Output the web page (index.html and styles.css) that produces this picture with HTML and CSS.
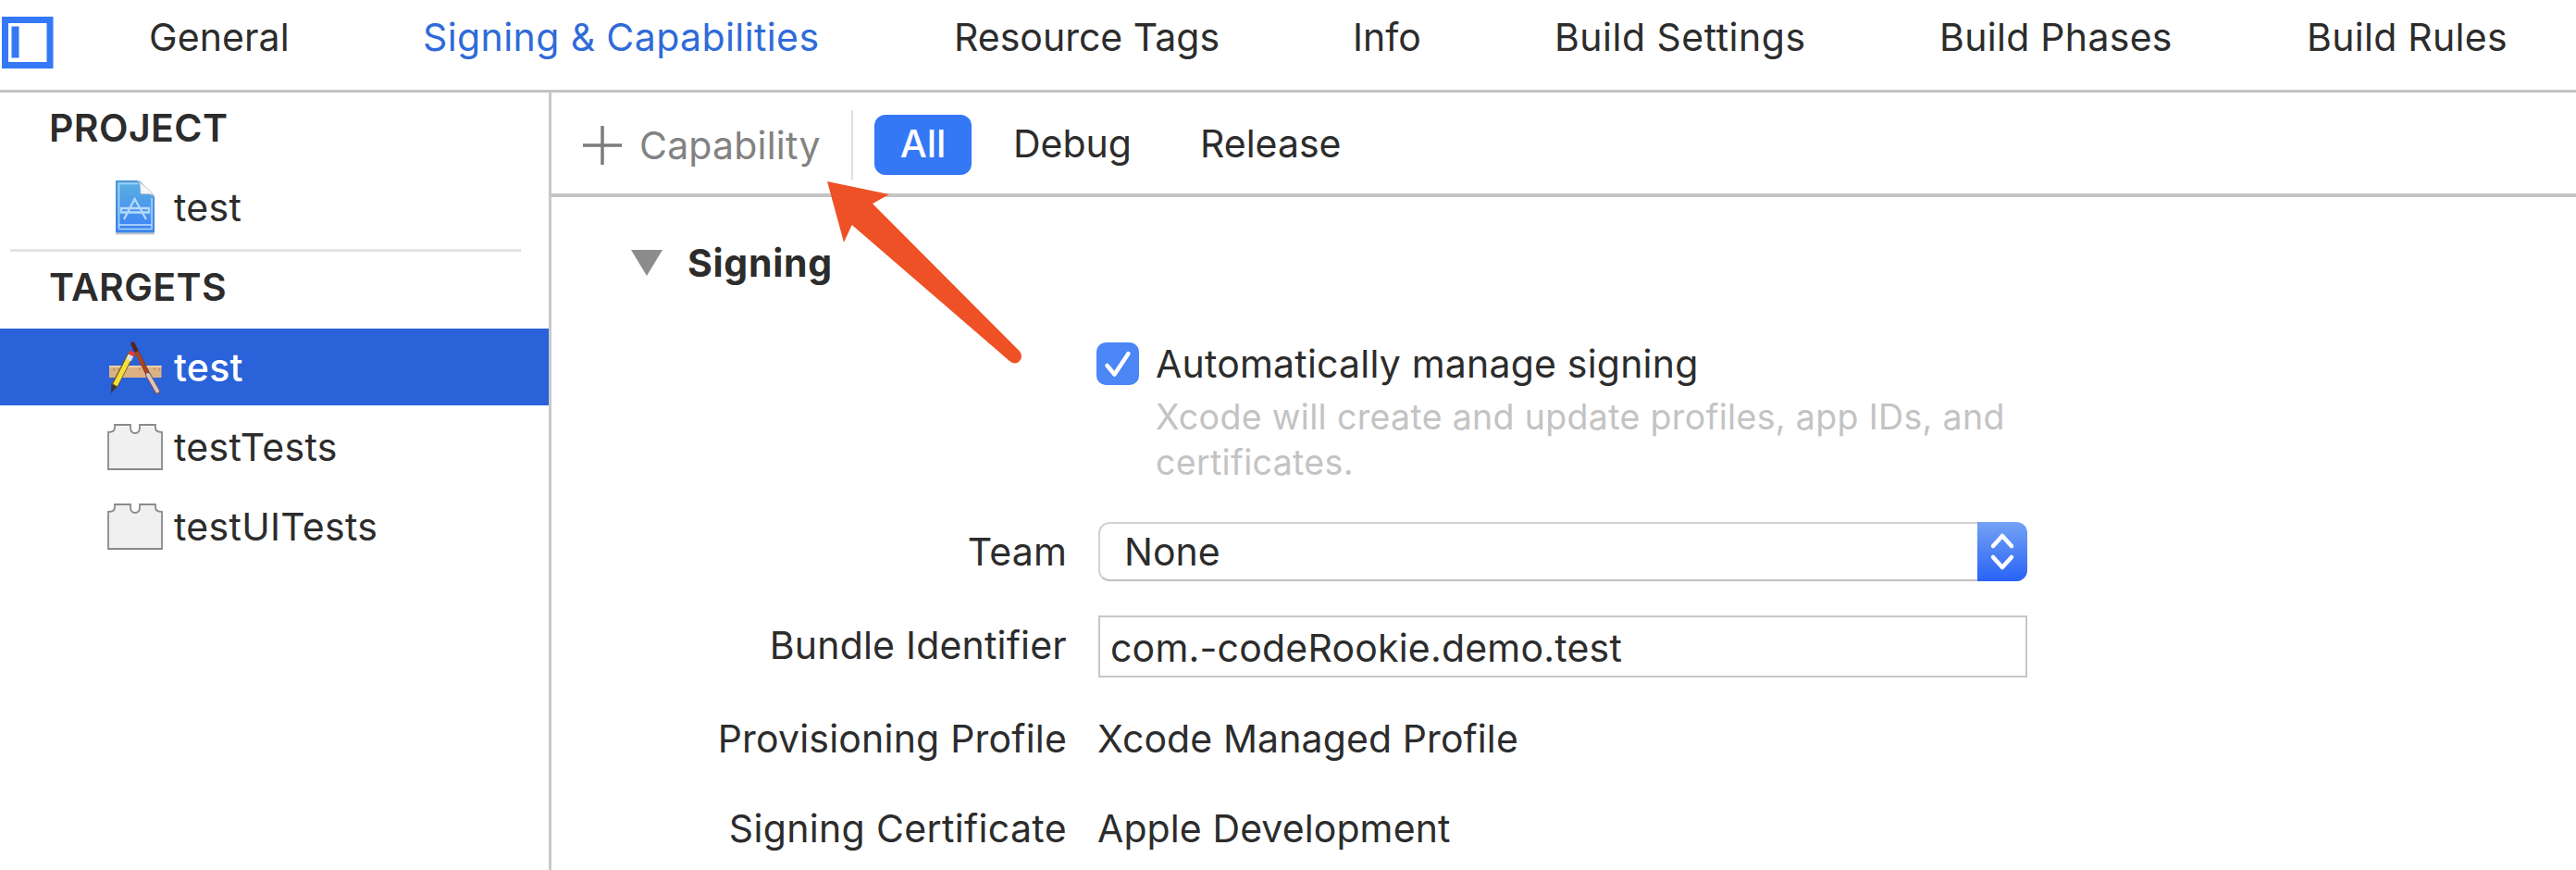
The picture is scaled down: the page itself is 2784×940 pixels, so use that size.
FILE: index.html
```html
<!DOCTYPE html>
<html lang="en">
<head>
<meta charset="utf-8">
<title>Signing &amp; Capabilities</title>
<link rel="stylesheet" href="styles.css">
</head>
<body>
<header class="tabs">
  <svg class="panel-toggle" viewBox="0 0 58 58"><rect x="5.500" y="4.500" width="48.500" height="49" fill="#fff" stroke="#3478f6" stroke-width="7"/><rect x="12.500" y="11.500" width="8" height="34" fill="#3478f6"/></svg>
  <nav class="tab-list">
    <a class="tab t-general">General</a>
    <a class="tab t-signing">Signing &amp; Capabilities</a>
    <a class="tab t-tags">Resource Tags</a>
    <a class="tab t-info">Info</a>
    <a class="tab t-settings">Build Settings</a>
    <a class="tab t-phases">Build Phases</a>
    <a class="tab t-rules">Build Rules</a>
  </nav>
</header>
<div class="body">
  <aside class="sidebar">
    <h2 class="group"><span>PROJECT</span></h2>
    <div class="item project-item">
      <svg class="icon" viewBox="0 0 60 60">
        <defs><linearGradient id="doc" x1="0" y1="0" x2="0" y2="1"><stop offset="0" stop-color="#5cb0e2"/><stop offset="1" stop-color="#3b82f5"/></linearGradient></defs>
        <path d="M9 58.500h42" stroke="#c4c8cd" stroke-width="2"/>
        <path d="M9.500 1.500H32q3 0 5 2.500l11 11q2.500 2 2.500 5v37h-41z" fill="url(#doc)" stroke="#4287cc" stroke-width="1"/>
        <path d="M12.500 53.500V4.500H33M48 20v33.500H12.500" fill="none" stroke="#a9d6f8" stroke-width="1.500"/>
        <path d="M33 1.500q3 2 3 14h8q7 .5 7 4-1-6-18-18z" fill="#f4f6f8" stroke="#b5bfc8" stroke-width=".8"/>
        <path d="M12.500 49h35.500" stroke="#c4e0ff" stroke-width="1.500"/>
        <path d="M30 20L18 43M29 20L42 43M15 31h30v4.500H15z" fill="none" stroke="#b4d9fd" stroke-width="2.300"/>
      </svg>
      <span>test</span>
    </div>
    <hr class="rule">
    <h2 class="group targets"><span>TARGETS</span></h2>
    <div class="item selected">
      <svg class="icon" viewBox="0 0 60 60">
        <rect x="2" y="28" width="56.500" height="13" fill="#dcb184"/>
        <path d="M2 29h56.500" stroke="#efd0a6" stroke-width="2"/>
        <path d="M7 30v4M12 30v3M17 30v4M35 30v3M40 30v4M51 30v3M56 30v4" stroke="#b98e62" stroke-width="1.300"/>
        <path d="M26 15L7 51" stroke="#6c5a1c" stroke-width="7"/>
        <path d="M26 15L8.500 49" stroke="#f6df3e" stroke-width="5"/>
        <path d="M27.500 13L25.500 17" stroke="#dc4038" stroke-width="6.500"/>
        <path d="M25.500 17L23 22" stroke="#dfe2e6" stroke-width="6"/>
        <path d="M4.500 48l5.500 3-6 7z" fill="#3a3638"/>
        <path d="M27.500 4.500L44 37" stroke="#54251e" stroke-width="4.500" stroke-linecap="round"/>
        <path d="M31.500 13L43 36" stroke="#a74324" stroke-width="4.500"/>
        <path d="M44 38L54 56" stroke="#6a5560" stroke-width="6" stroke-linecap="round"/>
        <path d="M44 38L54 55.500" stroke="#dfc3bb" stroke-width="4" stroke-linecap="round"/>
      </svg>
      <span>test</span>
    </div>
    <div class="item">
      <svg class="icon" viewBox="0 0 60 60"><path d="M1 54V14q7 0 7-5V6h17v3q0 6 5 6t5-6V6h17v3q0 5 7 5v40z" fill="#f0f0f0" stroke="#8a8a8a" stroke-width="1.800"/></svg>
      <span>testTests</span>
    </div>
    <div class="item">
      <svg class="icon" viewBox="0 0 60 60"><path d="M1 54V14q7 0 7-5V6h17v3q0 6 5 6t5-6V6h17v3q0 5 7 5v40z" fill="#f0f0f0" stroke="#8a8a8a" stroke-width="1.800"/></svg>
      <span>testUITests</span>
    </div>
  </aside>
  <main class="editor">
    <div class="toolbar">
      <div class="add">
        <svg class="plus" viewBox="0 0 42 42"><path d="M21 0v42M0 21h42" stroke="#7c7c7c" stroke-width="3.500"/></svg>
        <span class="add-label">Capability</span>
      </div>
      <button class="filter active"><span>All</span></button>
      <button class="filter debug"><span>Debug</span></button>
      <button class="filter release"><span>Release</span></button>
    </div>
    <section class="signing">
      <h3 class="heading"><svg class="disclosure" viewBox="0 0 34 28"><path d="M0 0h34L17 28z" fill="#8c8c8c"/></svg><span>Signing</span></h3>
      <div class="auto">
        <svg class="check" viewBox="0 0 46 46"><rect width="46" height="46" rx="10" fill="#4a86f5"/><path d="M11.500 25l8 9.500L34.500 12" fill="none" stroke="#fff" stroke-width="4.500" stroke-linecap="round" stroke-linejoin="round"/></svg>
        <div class="auto-text">
          <div class="auto-title"><span>Automatically manage signing</span></div>
          <p class="hint"><span>Xcode will create and update profiles, app IDs, and</span><br><span>certificates.</span></p>
        </div>
      </div>
      <div class="form">
        <label class="label"><span>Team</span></label>
        <div class="select"><span>None</span><svg class="stepper" viewBox="0 0 54 64"><path d="M17 26l10-11 10 11M17 38l10 11 10-11" fill="none" stroke="#fff" stroke-width="4.500" stroke-linecap="round" stroke-linejoin="round"/></svg></div>
        <label class="label bundle-label"><span>Bundle Identifier</span></label>
        <div class="field"><span>com.-codeRookie.demo.test</span></div>
        <label class="label"><span>Provisioning Profile</span></label>
        <div class="value"><span>Xcode Managed Profile</span></div>
        <label class="label certificate-label"><span>Signing Certificate</span></label>
        <div class="value"><span>Apple Development</span></div>
      </div>
    </section>
  </main>
</div>
<svg class="arrow" viewBox="0 0 212 199"><path d="M0 0L67 14 49 24 208 183.500Q212 189 208 194 203 199 197 194L26.700 47 18 66z" fill="#ef5126"/></svg>
</body>
</html>
```
FILE: styles.css
```css
* { box-sizing: border-box; }
body {
  margin: 0;
  width: 2784px;
  height: 940px;
  overflow: hidden;
  position: relative;
  background: #fff;
  color: #2c2c2c;
  font: 400 41px/50px Inter, "Liberation Sans", sans-serif;
}
h2, h3, p { margin: 0; }
svg { display: block; flex: none; }
span { white-space: nowrap; }

.tabs {
  height: 100px;
  display: flex;
  border-bottom: 3px solid #c3c3c3;
}
.panel-toggle { width: 58px; height: 58px; margin-top: 17px; }
.tab-list {
  display: grid;
  grid-template-columns: 296px 574px 431px 218px 416px 397px 300px;
  margin-left: 103px;
  padding-top: 15px;
}
.tab { white-space: nowrap; }
.t-general { letter-spacing: 0.1px; }
.t-signing { color: #2f6bd8; letter-spacing: 0.4px; }
.t-settings { letter-spacing: 0.5px; }
.t-phases, .t-rules { letter-spacing: 0.3px; }

.body { display: flex; height: 840px; }
.sidebar { width: 596px; border-right: 3px solid #c9c9c9; padding-top: 13px; }
.group { font-size: 41px; font-weight: 600; padding-left: 53px; line-height: 50px; letter-spacing: 0.4px; }
.item { display: flex; align-items: center; height: 86px; padding-left: 116px; gap: 12px; letter-spacing: 0.3px; }
.icon { width: 60px; height: 60px; overflow: visible; }
.project-item { margin-top: 18px; }
.rule { border: 0; height: 3px; background: #e3e3e3; margin: 2px 30px 0 11px; }
.targets { margin-top: 13px; }
.selected { background: #2962d9; color: #fff; font-weight: 500; height: 83px; margin: 20px 0 2px; }

.editor { flex: 1; }
.toolbar { height: 113px; border-bottom: 4px solid #c4c4c4; display: flex; align-items: center; padding-top: 4px; }
.add { display: flex; align-items: center; height: 75px; width: 326px; padding-left: 34px; gap: 19px; border-right: 2px solid #dedede; color: #828282; letter-spacing: 0.2px; }
.plus { width: 42px; height: 42px; }
.filter { border: 0; padding: 0 0 3px; background: none; font: inherit; color: inherit; text-align: left; }
.active { width: 105px; height: 65px; margin-left: 23px; border-radius: 12px; background: #3478f6; color: #fff; text-align: center; font-weight: 500; }
.debug { margin-left: 45px; width: 202px; }

.heading { display: flex; align-items: center; font-size: 41px; font-weight: 700; line-height: 50px; margin: 46px 0 0 86px; gap: 27px; letter-spacing: 0.7px; }
.disclosure { width: 34px; height: 28px; }
.auto { display: flex; gap: 18px; margin: 61px 0 0 589px; }
.check { width: 46px; height: 46px; }
.auto-title { line-height: 46px; letter-spacing: 0.2px; }
.hint { color: #c3c3c3; font-size: 37.500px; line-height: 49px; margin-top: 10px; letter-spacing: 0.33px; }
.form {
  display: grid;
  grid-template-columns: 557px 1004px;
  grid-template-rows: 64px 141px 58px 136px;
  column-gap: 34px;
  margin-top: 40px;
  align-items: center;
}
.label { text-align: right; letter-spacing: 0.2px; }
.bundle-label { padding-bottom: 3px; }
.certificate-label { letter-spacing: 0.35px; }
.select { height: 64px; display: flex; align-items: center; justify-content: space-between; padding-left: 26px; border: 2px solid #d2d2d2; border-bottom-color: #c0c0c0; border-radius: 12px; }
.stepper { width: 54px; height: 64px; margin-right: -2px; border-radius: 0 12px 12px 0; background: linear-gradient(#74a2f4, #2863f6); }
.field { height: 67px; border: 2px solid #c6c6c6; padding: 8px 0 0 11px; letter-spacing: 0.2px; }
.value { margin-left: -1px; letter-spacing: 0.1px; }
.arrow { position: absolute; left: 894px; top: 196px; width: 212px; height: 199px; }
```
